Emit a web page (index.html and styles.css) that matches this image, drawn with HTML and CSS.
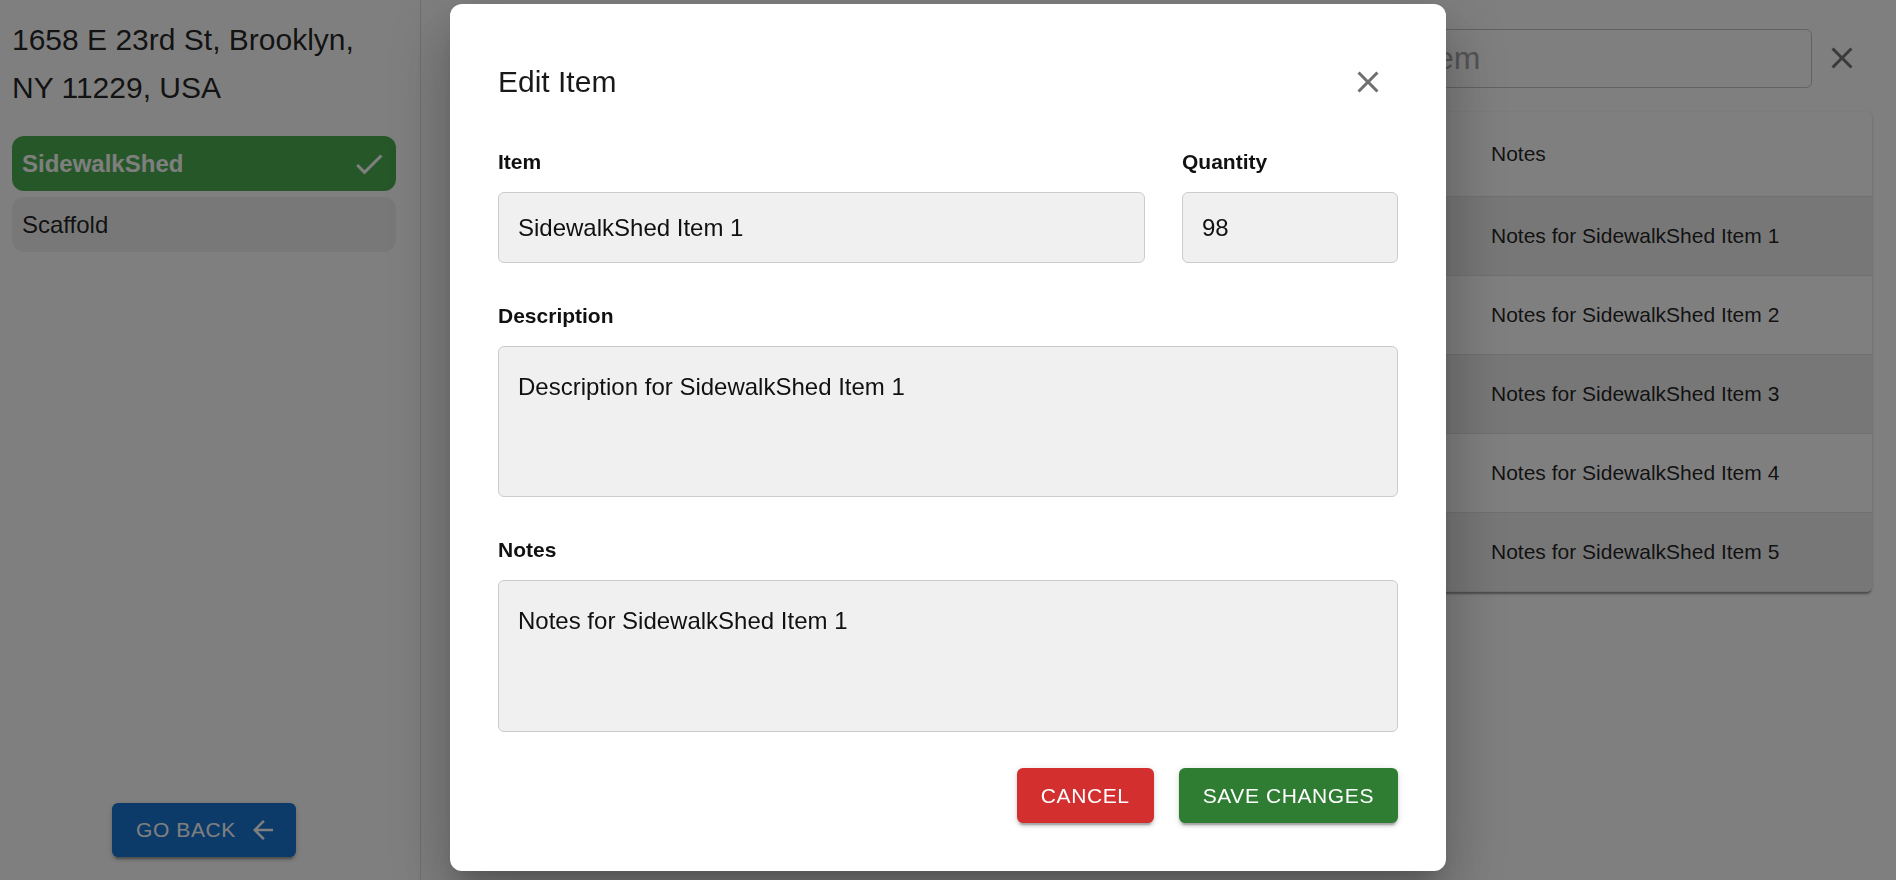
FILE: index.html
```html
<!DOCTYPE html>
<html lang="en">
<head>
<meta charset="utf-8">
<title>Edit Item</title>
<link rel="stylesheet" href="styles.css">
</head>
<body>
<div class="app">
  <aside class="sidebar">
    <h6 class="address">1658 E 23rd St, Brooklyn, NY 11229, USA</h6>
    <ul class="cat-list">
      <li class="cat active">
        <span>SidewalkShed</span>
        <svg class="cat-check" viewBox="0 0 24 24"><path d="M9 16.17 4.83 12l-1.42 1.41L9 19 21 7l-1.41-1.41z"/></svg>
      </li>
      <li class="cat"><span>Scaffold</span></li>
    </ul>
    <div class="sidebar-foot">
      <button class="btn btn-back">GO BACK
        <svg class="btn-end-icon" viewBox="0 0 24 24"><path d="M20 11H7.83l5.59-5.59L12 4l-8 8 8 8 1.41-1.41L7.83 13H20v-2z"/></svg>
      </button>
    </div>
  </aside>
  <main class="main">
    <div class="toolbar">
      <div class="search"><span class="placeholder">Search Item</span></div>
      <button class="icon-btn icon-btn-dark">
        <svg viewBox="0 0 24 24"><path d="M19 6.41 17.59 5 12 10.59 6.41 5 5 6.41 10.59 12 5 17.59 6.41 19 12 13.41 17.59 19 19 17.59 13.41 12z"/></svg>
      </button>
    </div>
    <div class="table-card">
      <table>
        <colgroup>
          <col class="c-item"><col class="c-qty"><col class="c-desc"><col class="c-notes">
        </colgroup>
        <thead>
          <tr><th></th><th></th><th></th><th>Notes</th></tr>
        </thead>
        <tbody>
          <tr><td></td><td></td><td></td><td>Notes for SidewalkShed Item 1</td></tr>
          <tr><td></td><td></td><td></td><td>Notes for SidewalkShed Item 2</td></tr>
          <tr><td></td><td></td><td></td><td>Notes for SidewalkShed Item 3</td></tr>
          <tr><td></td><td></td><td></td><td>Notes for SidewalkShed Item 4</td></tr>
          <tr><td></td><td></td><td></td><td>Notes for SidewalkShed Item 5</td></tr>
        </tbody>
      </table>
    </div>
  </main>
</div>

<div class="backdrop"></div>
<div class="dialog-wrap">
  <div class="dialog">
    <div class="dialog-header">
      <h2 class="dialog-title">Edit Item</h2>
      <button class="icon-btn icon-btn-grey">
        <svg viewBox="0 0 24 24"><path d="M19 6.41 17.59 5 12 10.59 6.41 5 5 6.41 10.59 12 5 17.59 6.41 19 12 13.41 17.59 19 19 17.59 13.41 12z"/></svg>
      </button>
    </div>
    <div class="field-row">
      <div class="field">
        <label class="field-label">Item</label>
        <input class="input" type="text" value="SidewalkShed Item 1">
      </div>
      <div class="field">
        <label class="field-label">Quantity</label>
        <input class="input" type="text" value="98">
      </div>
    </div>
    <div class="field field-spaced">
      <label class="field-label">Description</label>
      <textarea class="textarea textarea-desc">Description for SidewalkShed Item 1</textarea>
    </div>
    <div class="field field-spaced">
      <label class="field-label">Notes</label>
      <textarea class="textarea textarea-notes">Notes for SidewalkShed Item 1</textarea>
    </div>
    <div class="dialog-actions">
      <button class="btn btn-cancel">CANCEL</button>
      <button class="btn btn-save">SAVE CHANGES</button>
    </div>
  </div>
</div>
</body>
</html>
```

FILE: styles.css
```css
html, body {
  margin: 0;
  padding: 0;
}

body {
  width: 1896px;
  height: 880px;
  overflow: hidden;
  background: #ffffff;
  font-family: "Liberation Sans", Arial, Helvetica, sans-serif;
  color: rgba(0, 0, 0, 0.87);
}

.app {
  display: flex;
  height: 880px;
}

/* ---------- Sidebar ---------- */
.sidebar {
  width: 421px;
  flex: none;
  box-sizing: border-box;
  border-right: 1px solid #e0e0e0;
  display: flex;
  flex-direction: column;
  padding: 16px 0 23px;
}

.address {
  margin: 0 0 0 12px;
  width: 384px;
  font-size: 30px;
  line-height: 48px;
  font-weight: normal;
  color: rgba(0, 0, 0, 0.87);
}

.cat-list {
  list-style: none;
  margin: 24px 0 0 12px;
  padding: 0;
  width: 384px;
  display: flex;
  flex-direction: column;
  gap: 6px;
}

.cat {
  height: 55px;
  box-sizing: border-box;
  border-radius: 12px;
  background: #f0f0f0;
  display: flex;
  align-items: center;
  justify-content: space-between;
  padding: 0 9px 0 10px;
  font-size: 24px;
  color: rgba(0, 0, 0, 0.87);
}

.cat.active {
  background: #4caf50;
  color: #ffffff;
  font-weight: bold;
}

.cat-check {
  width: 36px;
  height: 36px;
  fill: #ffffff;
}

.sidebar-foot {
  margin-top: auto;
  margin-left: 12px;
  width: 384px;
  display: flex;
  justify-content: center;
}

/* ---------- Buttons ---------- */
.btn {
  display: inline-flex;
  align-items: center;
  justify-content: center;
  box-sizing: border-box;
  border: 0;
  border-radius: 6px;
  padding: 0 24px;
  font-family: inherit;
  font-size: 21px;
  font-weight: normal;
  letter-spacing: 0.6px;
  color: #ffffff;
  cursor: pointer;
  box-shadow: 0 4.5px 1.5px -3px rgba(0, 0, 0, 0.2),
              0 3px 3px 0 rgba(0, 0, 0, 0.14),
              0 1.5px 7.5px 0 rgba(0, 0, 0, 0.12);
}

.btn-back {
  height: 54px;
  background: #1976d2;
}

.btn-end-icon {
  width: 30px;
  height: 30px;
  margin-left: 12px;
  margin-right: -6px;
  fill: #ffffff;
}

.btn-cancel {
  height: 55px;
  background: #d32f2f;
}

.btn-save {
  height: 55px;
  background: #2e7d32;
}

.icon-btn {
  width: 60px;
  height: 60px;
  flex: none;
  padding: 0;
  border: 0;
  background: none;
  border-radius: 50%;
  display: flex;
  align-items: center;
  justify-content: center;
}

.icon-btn svg {
  width: 36px;
  height: 36px;
}

.icon-btn-dark svg {
  fill: #757575;
}

.icon-btn-grey svg {
  fill: #6e6e6e;
}

/* ---------- Main ---------- */
.main {
  flex: 1;
  box-sizing: border-box;
  padding: 28px 24px 0 36px;
  display: flex;
  flex-direction: column;
}

.toolbar {
  display: flex;
  justify-content: flex-end;
  align-items: center;
  height: 60px;
}

.search {
  width: 525px;
  height: 59px;
  box-sizing: border-box;
  border: 1px solid #c4c4c4;
  border-radius: 6px;
  display: flex;
  align-items: center;
  padding: 0 20px;
}

.placeholder {
  font-size: 32px;
  color: #a8a8a8;
}

.table-card {
  margin-top: 24px;
  background: #ffffff;
  border-radius: 6px;
  overflow: hidden;
  box-shadow: 0 3px 1.5px -1.5px rgba(0, 0, 0, 0.2),
              0 1.5px 1.5px 0 rgba(0, 0, 0, 0.14),
              0 1.5px 4.5px 0 rgba(0, 0, 0, 0.12);
}

table {
  width: 100%;
  border-collapse: collapse;
  table-layout: fixed;
  font-size: 21px;
}

.c-item { width: 350px; }
.c-qty { width: 200px; }
.c-desc { width: 460px; }
.c-notes { width: 405px; }

th {
  text-align: left;
  font-weight: normal;
  padding: 24px;
  height: 36px;
  line-height: 36px;
  border-bottom: 1px solid #e0e0e0;
  color: rgba(0, 0, 0, 0.87);
}

td {
  padding: 24px;
  height: 30px;
  line-height: 30px;
  border-bottom: 1px solid #e0e0e0;
  color: rgba(0, 0, 0, 0.87);
  white-space: nowrap;
  overflow: hidden;
}

tbody tr:nth-child(odd) {
  background: #eeeeee;
}

/* ---------- Dialog ---------- */
.backdrop {
  position: fixed;
  inset: 0;
  background: rgba(0, 0, 0, 0.5);
}

.dialog-wrap {
  position: fixed;
  inset: 0;
  display: flex;
  justify-content: center;
  align-items: flex-start;
}

.dialog {
  margin-top: 4px;
  width: 996px;
  box-sizing: border-box;
  padding: 48px;
  background: #ffffff;
  border-radius: 12px;
  box-shadow: 0 16.5px 22.5px -10.5px rgba(0, 0, 0, 0.2),
              0 36px 57px 4.5px rgba(0, 0, 0, 0.14),
              0 13.5px 69px 12px rgba(0, 0, 0, 0.12);
}

.dialog-header {
  display: flex;
  justify-content: space-between;
  align-items: center;
  height: 60px;
  margin-bottom: 38px;
}

.dialog-title {
  margin: 0;
  font-size: 30px;
  line-height: 48px;
  font-weight: normal;
  color: rgba(0, 0, 0, 0.9);
}

.field-row {
  display: grid;
  grid-template-columns: 1fr 216px;
  column-gap: 37px;
}

.field {
  display: flex;
  flex-direction: column;
}

.field-spaced {
  margin-top: 41px;
}

.field-label {
  display: block;
  font-size: 21px;
  line-height: 24px;
  font-weight: bold;
  color: #111111;
  margin-bottom: 18px;
}

.input,
.textarea {
  display: block;
  width: 100%;
  box-sizing: border-box;
  margin: 0;
  border: 1px solid #cccccc;
  border-radius: 6px;
  background: #f0f0f0;
  font-family: inherit;
  font-size: 24px;
  color: #111111;
  outline: none;
}

.input {
  height: 71px;
  padding: 0 19px;
}

.textarea {
  padding: 23px 19px;
  line-height: 34.5px;
  resize: none;
  overflow: hidden;
}

.textarea-desc {
  height: 151px;
}

.textarea-notes {
  height: 152px;
}

.dialog-actions {
  margin-top: 36px;
  display: flex;
  justify-content: flex-end;
  gap: 25px;
}
```
